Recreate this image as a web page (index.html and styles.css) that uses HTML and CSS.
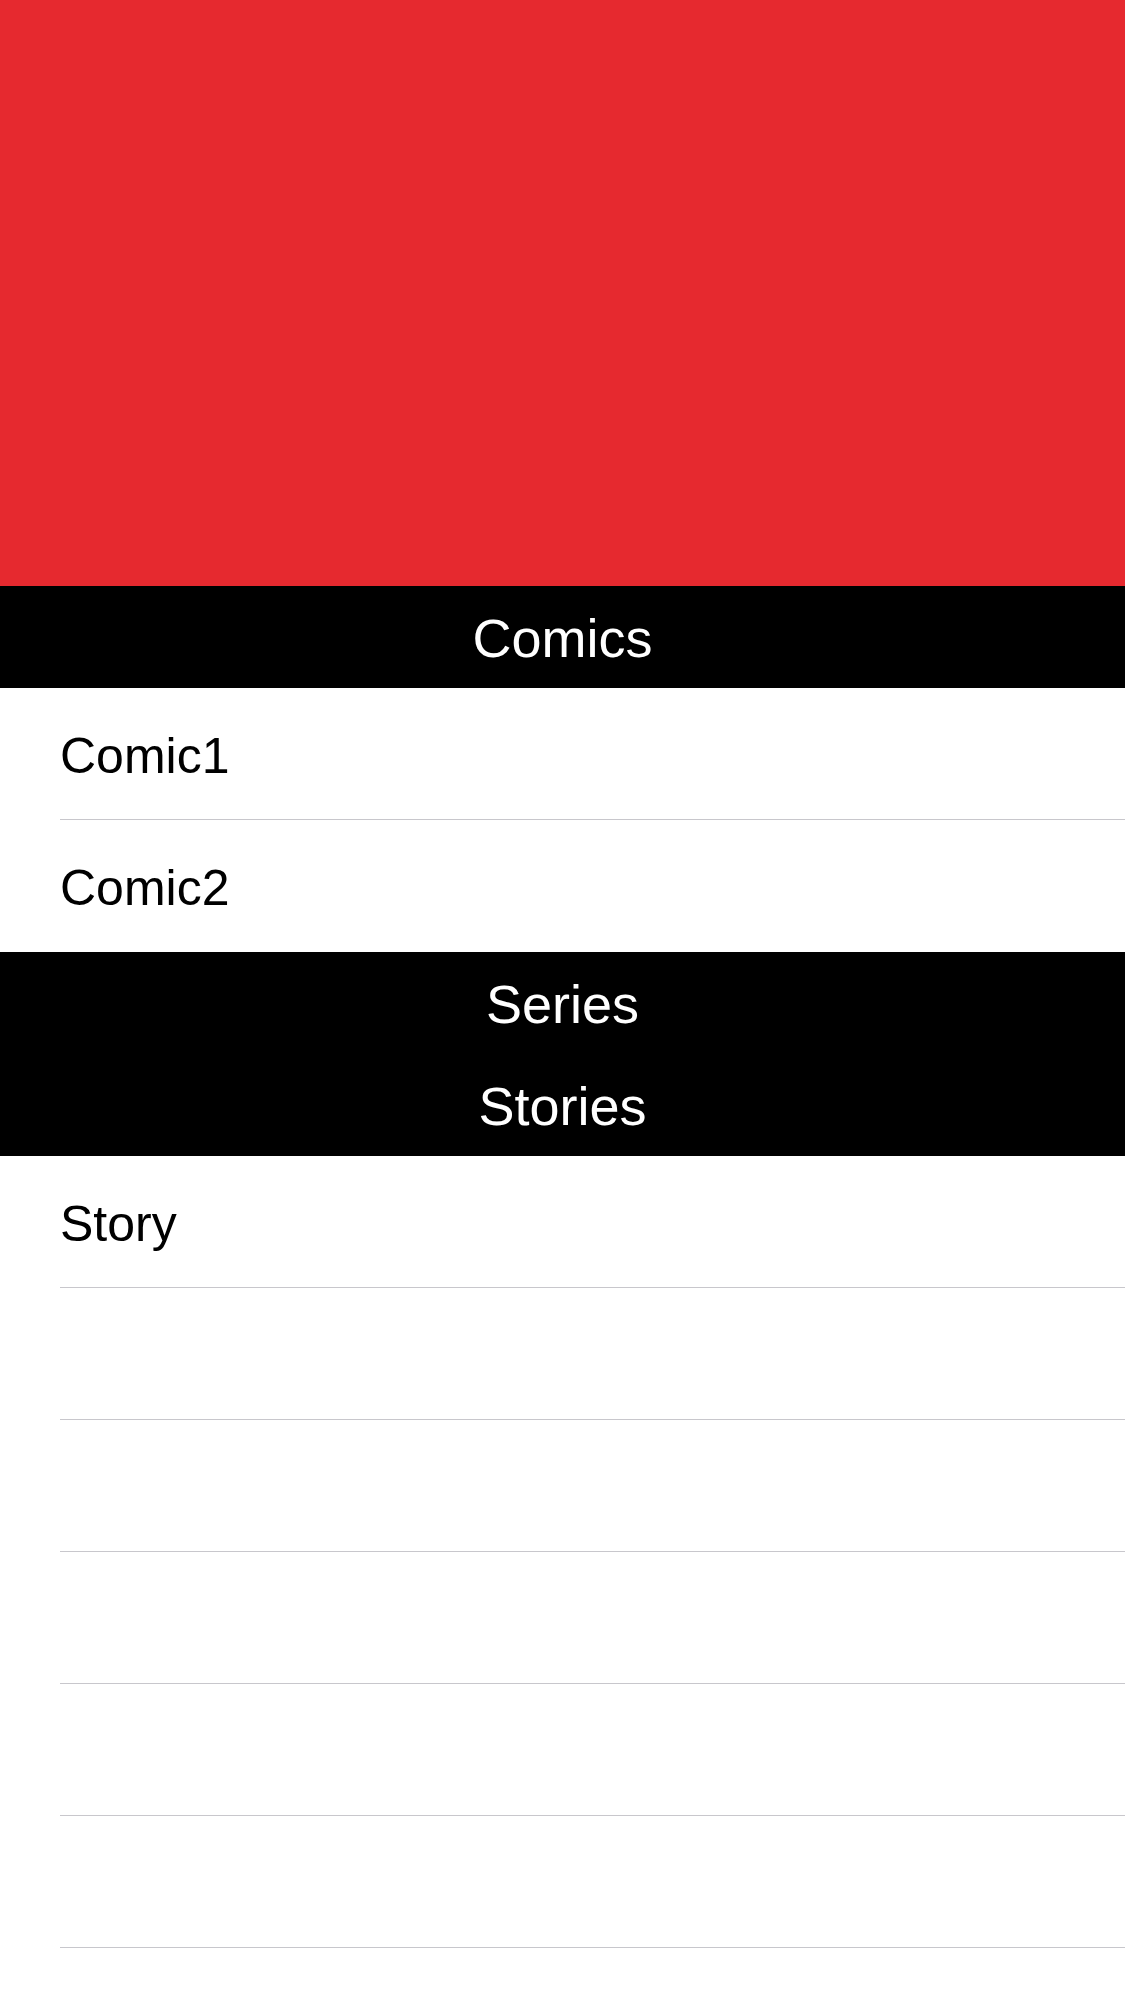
FILE: index.html
```html
<!DOCTYPE html>
<html lang="en">
<head>
<meta charset="utf-8">
<title>Character</title>
<link rel="stylesheet" href="styles.css">
</head>
<body>
<div class="screen">
  <div class="banner"></div>
  <section class="section">
    <h2 class="section-header">Comics</h2>
    <ul class="rows">
      <li class="row">Comic1</li>
      <li class="row row-last">Comic2</li>
    </ul>
  </section>
  <section class="section">
    <h2 class="section-header">Series</h2>
  </section>
  <section class="section">
    <h2 class="section-header">Stories</h2>
    <ul class="rows">
      <li class="row">Story</li>
      <li class="row"></li>
      <li class="row"></li>
      <li class="row"></li>
      <li class="row"></li>
      <li class="row"></li>
    </ul>
  </section>
</div>
</body>
</html>
```
FILE: styles.css
```css
html, body {
  margin: 0;
  padding: 0;
  background: #ffffff;
}

body {
  font-family: "Liberation Sans", Arial, sans-serif;
  -webkit-font-smoothing: antialiased;
}

.screen {
  width: 1125px;
  min-height: 2001px;
  overflow: hidden;
  background: #ffffff;
}

.banner {
  height: 586px;
  background: #e6292f;
}

.section {
  display: flex;
  flex-direction: column;
}

.section-header {
  margin: 0;
  height: 102px;
  box-sizing: border-box;
  padding-top: 2px;
  background: #000000;
  color: #ffffff;
  font-size: 54px;
  font-weight: 400;
  line-height: 100px;
  text-align: center;
}

.rows {
  list-style: none;
  margin: 0;
  padding: 0;
}

.row {
  height: 132px;
  box-sizing: border-box;
  margin-left: 60px;
  padding-top: 6px;
  border-bottom: 1px solid #c8c7cc;
  color: #000000;
  font-size: 50px;
  line-height: 125px;
}

.row-last {
  border-bottom: none;
}
```
